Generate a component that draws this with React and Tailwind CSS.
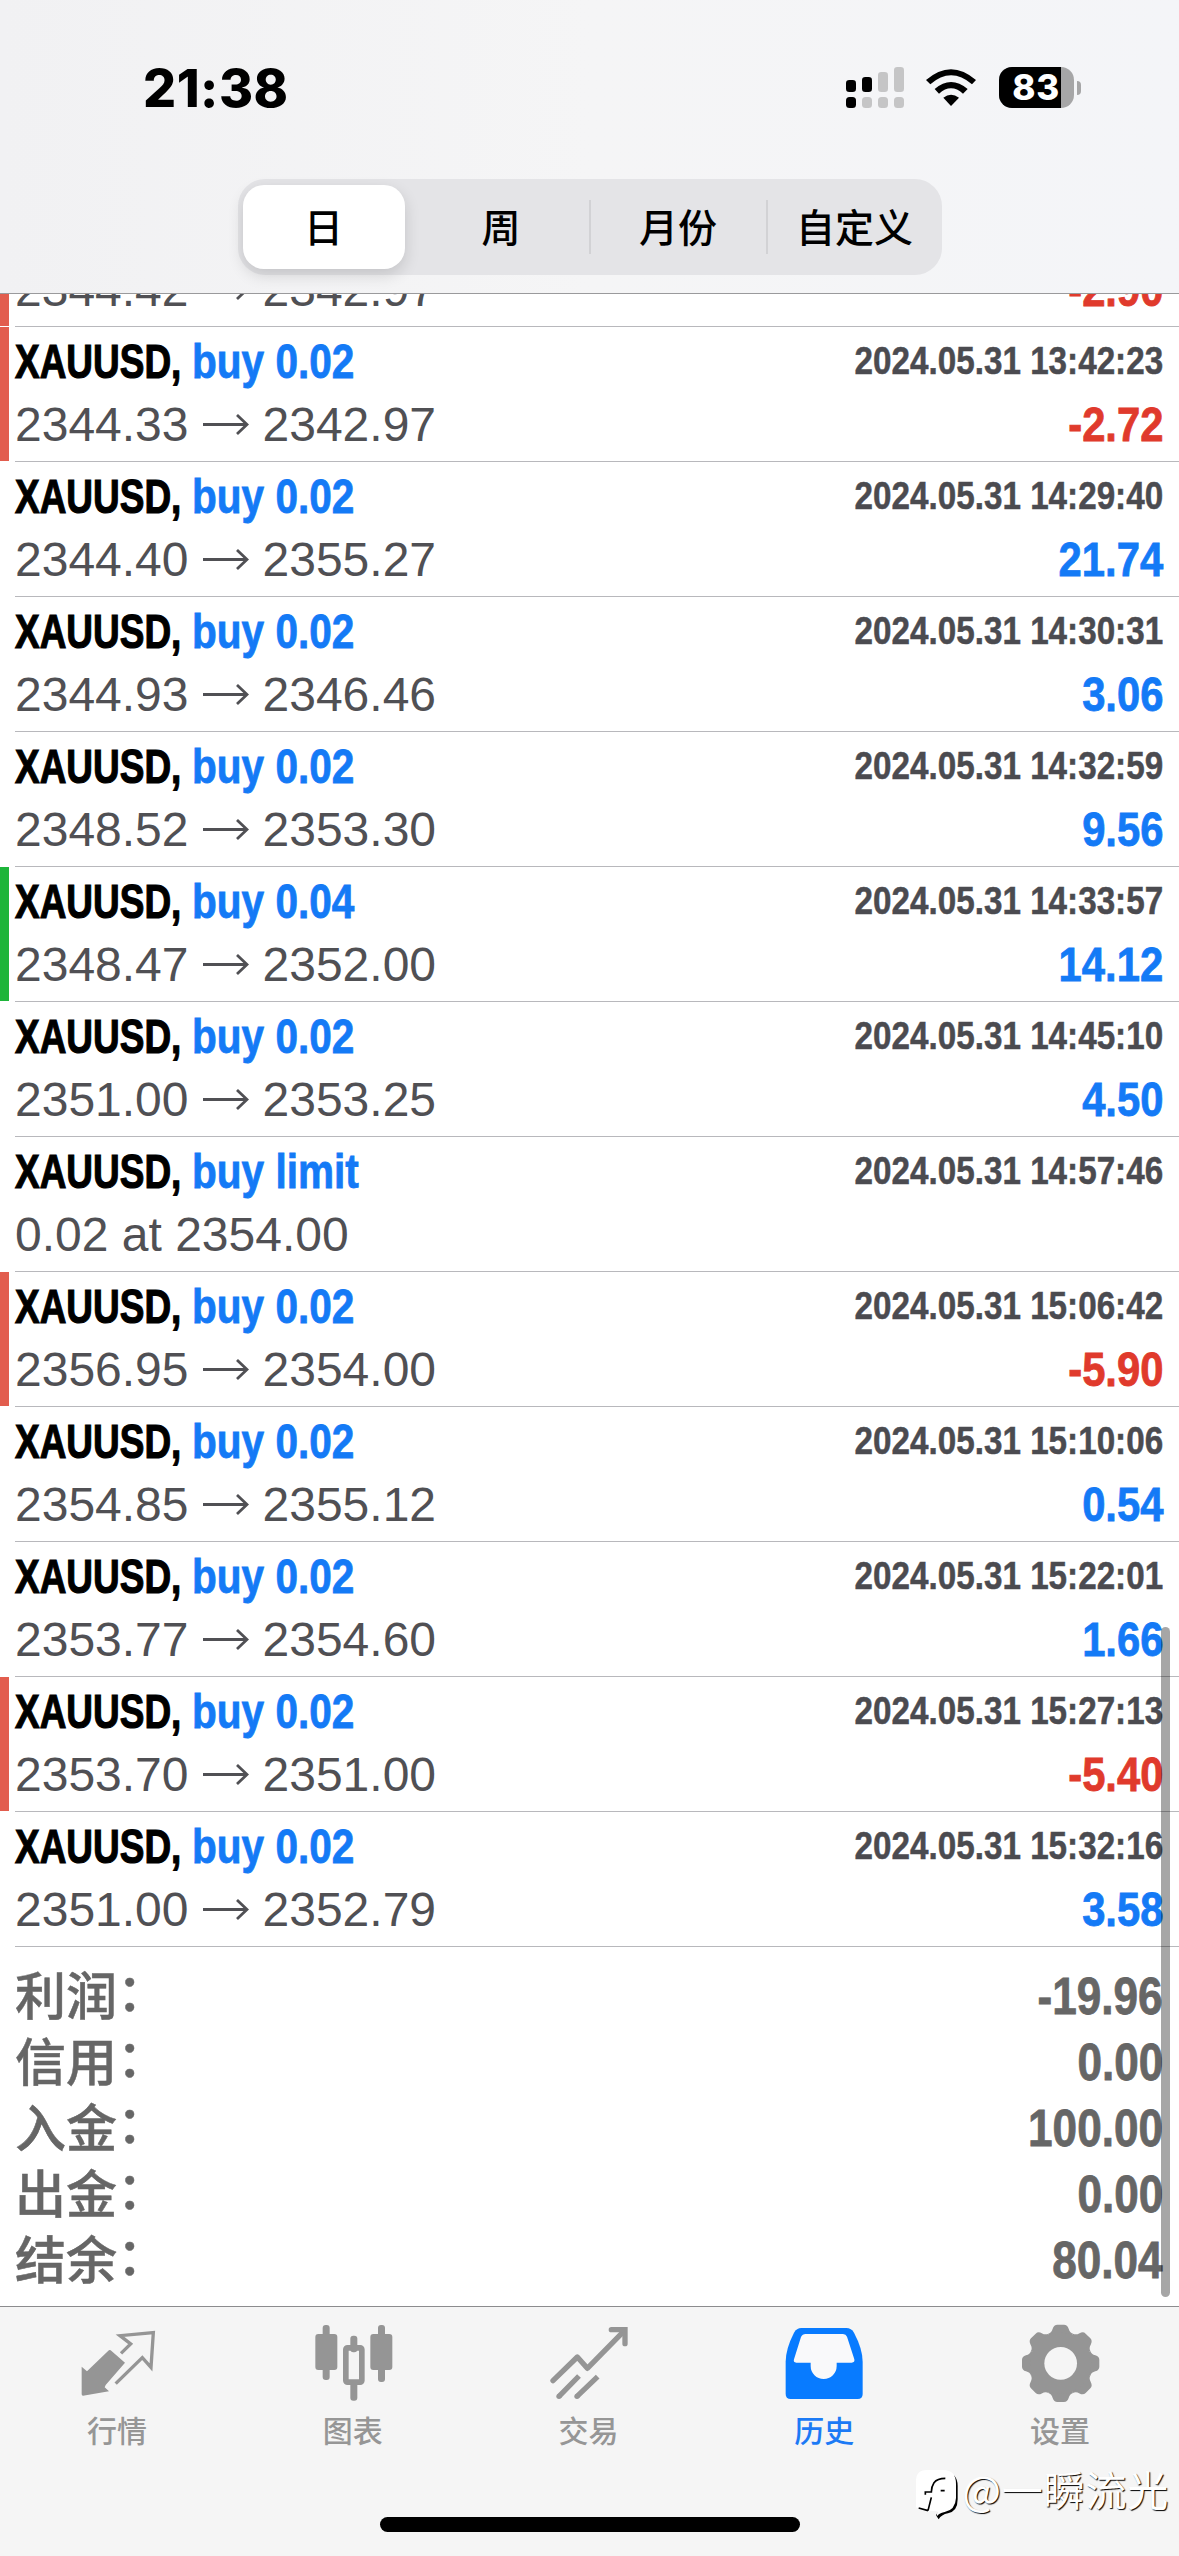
const SANS = "font-['Liberation_Sans','Noto_Sans_CJK_SC',sans-serif]";
const CJK = "font-['Noto_Sans_CJK_SC',sans-serif]";

const rows = [
  { side: "buy 0.02", from: "2344.42", to: "2342.97", time: "2024.05.31 13:41:58", value: "-2.90", mark: "sl" },
  { side: "buy 0.02", from: "2344.33", to: "2342.97", time: "2024.05.31 13:42:23", value: "-2.72", mark: "sl" },
  { side: "buy 0.02", from: "2344.40", to: "2355.27", time: "2024.05.31 14:29:40", value: "21.74" },
  { side: "buy 0.02", from: "2344.93", to: "2346.46", time: "2024.05.31 14:30:31", value: "3.06" },
  { side: "buy 0.02", from: "2348.52", to: "2353.30", time: "2024.05.31 14:32:59", value: "9.56" },
  { side: "buy 0.04", from: "2348.47", to: "2352.00", time: "2024.05.31 14:33:57", value: "14.12", mark: "tp" },
  { side: "buy 0.02", from: "2351.00", to: "2353.25", time: "2024.05.31 14:45:10", value: "4.50" },
  { side: "buy limit", note: "0.02 at 2354.00", time: "2024.05.31 14:57:46" },
  { side: "buy 0.02", from: "2356.95", to: "2354.00", time: "2024.05.31 15:06:42", value: "-5.90", mark: "sl" },
  { side: "buy 0.02", from: "2354.85", to: "2355.12", time: "2024.05.31 15:10:06", value: "0.54" },
  { side: "buy 0.02", from: "2353.77", to: "2354.60", time: "2024.05.31 15:22:01", value: "1.66" },
  { side: "buy 0.02", from: "2353.70", to: "2351.00", time: "2024.05.31 15:27:13", value: "-5.40", mark: "sl" },
  { side: "buy 0.02", from: "2351.00", to: "2352.79", time: "2024.05.31 15:32:16", value: "3.58" },
];

const totals = [
  ["利润", "-19.96"],
  ["信用", "0.00"],
  ["入金", "100.00"],
  ["出金", "0.00"],
  ["结余", "80.04"],
];

const markColor = { sl: "bg-[#e25d4e]", tp: "bg-[#1eb53a]" };

function Signal() {
  const cols = [
    [0, 13, "#000"],
    [16, 10, "#000"],
    [32, 5, "#c5c5c6"],
    [48, 0, "#c5c5c6"],
  ];
  return (
    <svg width="58" height="41" viewBox="0 0 58 41">
      {cols.map(([x, y, c], i) => (
        <g key={x}>
          <rect x={x} y={y} width="10" height={25 - y} rx="3.3" fill={c} />
          <rect x={x} y="30" width="10" height="11" rx="3.5" fill={i === 0 ? "#000" : "#c5c5c6"} />
        </g>
      ))}
    </svg>
  );
}

function Wifi() {
  return (
    <svg width="50" height="38" viewBox="0 0 150 114">
      <path d="M0 33 Q75 -32 150 33 L138 46 Q75 -8 13 46Z" />
      <path d="M26 60 Q75 18 125 60 L111 74 Q75 42 39 74Z" />
      <path d="M52 86 Q75 68 99 86 L75 111Z" />
    </svg>
  );
}

function Battery() {
  return (
    <div className="flex items-center gap-[3px]">
      <div className="flex h-[41px] w-[75px] overflow-hidden rounded-[13px] bg-[#a6a6a7]">
        <div className="flex h-full w-[62px] items-center justify-end bg-black pr-[1px] font-['Inter',sans-serif] text-[35px] leading-none font-extrabold text-white">
          <span className="tracking-[0.8px]">83</span>
        </div>
      </div>
      <div className="h-[14px] w-[4px] rounded-r-full bg-[#a6a6a7]" />
    </div>
  );
}

function Header() {
  return (
    <header className="flex h-[294px] flex-col items-center border-b border-[#9a9a9c] bg-linear-to-r from-[#f1f1f3] via-[#f5f5f6] to-[#f4f5f8]">
      <div className="flex h-[179px] w-full items-start pt-[67px] pr-[98px] pl-[143px]">
        <div className="-mt-[4px] font-['Inter',sans-serif] text-[52px] leading-[51px] font-extrabold tracking-[0.5px] text-black">21:38</div>
        <div className="ml-auto flex">
          <Signal />
          <div className="mt-[2px] ml-[22px]">
            <Wifi />
          </div>
          <div className="ml-[23px]">
            <Battery />
          </div>
        </div>
      </div>
      <div className={`${CJK} flex h-[96px] w-[704px] items-center rounded-[27px] bg-[#e4e4e7] text-[39px] leading-none font-medium text-black`}>
        <div className="flex w-[176px] items-center pl-[5px]">
          <div className="flex h-[84px] w-[162px] items-center justify-center rounded-[21px] bg-white pb-[4px] shadow-[0_6px_16px_rgba(0,0,0,0.14)]">日</div>
        </div>
        <div className="flex h-[54px] w-[177px] items-center justify-center border-r-2 border-[#d2d2d5] pb-[4px]">周</div>
        <div className="flex h-[54px] w-[177px] items-center justify-center border-r-2 border-[#d2d2d5] pb-[4px]">月份</div>
        <div className="flex h-[54px] w-[174px] items-center justify-center pb-[4px]">自定义</div>
      </div>
    </header>
  );
}

function Row({ side, from, to, note, time, value, mark }) {
  return (
    <div className="flex h-[135px]">
      <div className={`mb-px w-[9px] ${mark ? markColor[mark] : ""}`} />
      <div className="ml-[6px] flex flex-1 flex-col gap-[15px] border-b border-[#b8b8bc] pt-[11px] pr-[16px] whitespace-nowrap">
        <div className="flex h-[48px] text-[48px] leading-[48px] font-bold">
          <div className="w-[177px]">
            <span className="inline-block origin-left scale-x-[0.77] text-black [-webkit-text-stroke:1.2px_#000]">XAUUSD,</span>
          </div>
          <div className="flex-1">
            <span className="inline-block origin-left scale-x-[0.845] text-[#147af6] [-webkit-text-stroke:0.8px_#147af6]">{side}</span>
          </div>
          <div className="-mt-px origin-right scale-x-[0.852] text-[39px] text-[#4b4b50] [-webkit-text-stroke:0.5px_#4b4b50]">{time}</div>
        </div>
        <div className="flex h-[48px] justify-between text-[48px] leading-[48px]">
          {note ? (
            <div className="text-[#505054]">{note}</div>
          ) : (
            <div className="flex items-center text-[#505054]">
              <span>{from}</span>
              <svg className="mr-[14px] ml-[14px]" width="46" height="22" viewBox="0 0 46 22" fill="none" stroke="#505054" strokeWidth="2.8">
                <path d="M0 10.5H44M34 1L44 10.5L34 20" />
              </svg>
              <span>{to}</span>
            </div>
          )}
          {value && (
            <div
              className={`origin-right scale-x-[0.87] font-bold [-webkit-text-stroke:0.8px_currentColor] ${value.startsWith("-") ? "text-[#e03a2c]" : "text-[#147af6]"}`}
            >
              {value}
            </div>
          )}
        </div>
      </div>
    </div>
  );
}

function QuotesIcon() {
  return (
    <svg width="80" height="80" viewBox="0 0 240 240" fill="none">
      <path d="M11 128L27 142L91 80Q94 76 98 79L141 116L83 183L80 190L93 202L15 215Q11 215 11 211Z" fill="#959595" />
      <path d="M129 88L158 60L126 35L226 26L219 130L193 101L113 179" stroke="#959595" strokeWidth="10" />
    </svg>
  );
}

function ChartIcon() {
  return (
    <svg width="80" height="80" viewBox="0 0 240 240" fill="#959595">
      <rect x="26" y="3" width="21" height="165" rx="9" />
      <rect x="4" y="30" width="66" height="108" rx="9" />
      <rect x="109" y="35" width="21" height="50" rx="9" />
      <rect x="109" y="170" width="21" height="60" rx="9" />
      <rect x="95.5" y="71.5" width="48" height="103" rx="5" fill="none" stroke="#959595" strokeWidth="17" />
      <rect x="192" y="3" width="21" height="171" rx="9" />
      <rect x="169" y="30" width="66" height="108" rx="9" />
    </svg>
  );
}

function TradeIcon() {
  return (
    <svg width="80" height="80" viewBox="0 0 240 240" fill="none" stroke="#959595" strokeWidth="16">
      <path d="M12 170L85 99L115 133L224 22" strokeLinecap="round" strokeLinejoin="round" />
      <path d="M187 17H228V59" strokeLinecap="round" />
      <path d="M30 217L90 156M84 217L146 158" />
      <circle cx="30" cy="217" r="8" fill="#959595" stroke="none" />
      <circle cx="84" cy="217" r="8" fill="#959595" stroke="none" />
    </svg>
  );
}

function HistoryIcon() {
  return (
    <svg width="80" height="80" viewBox="0 0 240 240">
      <path d="M49 12H184Q199 12 207 26Q233 75 233 113V210Q233 225 218 225H17Q2 225 2 210V113Q2 75 27 26Q35 12 49 12Z" fill="#087bff" />
      <path d="M62 30H174Q183 30 186 38L208 106Q210 116 200 116H155V126A39 39 0 0 1 77 126V116H34Q24 116 27 106L48 39Q52 30 62 30Z" fill="#f9f9fa" />
    </svg>
  );
}

function SettingsIcon() {
  return (
    <svg width="80" height="80" viewBox="0 0 240 240">
      <g transform="translate(119 118)" fill="#959595">
        {[0, 45, 90, 135, 180, 225, 270, 315].map((a) => (
          <path key={a} transform={`rotate(${a})`} d="M0 0L-37 -89Q-27 -92 -24 -104Q-20 -116 -10 -116H10Q20 -116 24 -104Q27 -92 37 -89Z" />
        ))}
        <circle r="92" />
        <circle r="49" fill="#f5f5f5" />
      </g>
    </svg>
  );
}

const tabs = [
  ["行情", QuotesIcon],
  ["图表", ChartIcon],
  ["交易", TradeIcon],
  ["历史", HistoryIcon],
  ["设置", SettingsIcon],
];

function Watermark() {
  return (
    <div className={`${CJK} absolute top-[149px] right-[10px] flex items-center text-[41px] leading-[50px] font-normal text-white [text-shadow:1px_1px_1px_#000]`}>
      <svg className="mt-[14px] mr-[2px]" width="44" height="50" viewBox="0 0 132 150">
        <path d="M38 8H88Q125 8 125 48V88Q125 124 96 130Q76 134 68 148L60 136L68 122Z" fill="#000" />
        <path d="M32 0H82Q120 0 120 42V84Q118 120 86 126Q68 130 62 140L64 124L44 122L32 126L0 112V34Q0 0 32 0Z" fill="#fff" />
        <path d="M28 74V66H46Q46 50 54 38Q64 25 88 25M74 62H86M46 82L36 122M8 114L36 122" fill="none" stroke="#000" strokeWidth="5" />
      </svg>
      <span className="tracking-[0.8px]">@一瞬流光</span>
    </div>
  );
}

export default function App() {
  return (
    <div className={`${SANS} flex h-[2556px] w-[1179px] flex-col overflow-hidden bg-white`}>
      <Header />
      <main className="relative h-[2012px] overflow-hidden">
        <div className="-mt-[102px]">
          {rows.map((r) => (
            <Row key={r.time} {...r} />
          ))}
        </div>
        <div className="flex flex-col pt-[17px] pr-[16px] pl-[15px] text-[#666]">
          {totals.map(([label, value]) => (
            <div key={label} className="flex h-[66px] justify-between text-[51px] leading-[66px] font-bold">
              <div className={`${CJK} -mt-[4px] flex font-medium [-webkit-text-stroke:0.5px_#666]`}>
                <span>{label}</span>
                <span className="-mt-[4px]">：</span>
              </div>
              <div className="origin-right scale-x-[0.865] [-webkit-text-stroke:0.8px_#666]">{value}</div>
            </div>
          ))}
        </div>
        <div className="absolute top-[1333px] right-[9px] h-[670px] w-[9px] rounded-full bg-black/35" />
      </main>
      <footer className="relative flex h-[250px] flex-col items-center border-t border-[#8c8c8e] bg-[#f5f5f5]">
        <nav className="flex w-full pt-[17px]">
          {tabs.map(([label, Icon]) => (
            <div key={label} className={`${CJK} flex flex-1 flex-col items-center text-[30px] leading-[40px] font-medium ${label === "历史" ? "text-[#1c7af5]" : "text-[#969696]"}`}>
              <Icon />
              <span className="mt-[5px] mr-[2px]">{label}</span>
            </div>
          ))}
        </nav>
        <div className="mt-auto mb-[24px] h-[15px] w-[420px] rounded-full bg-black" />
        <Watermark />
      </footer>
    </div>
  );
}
